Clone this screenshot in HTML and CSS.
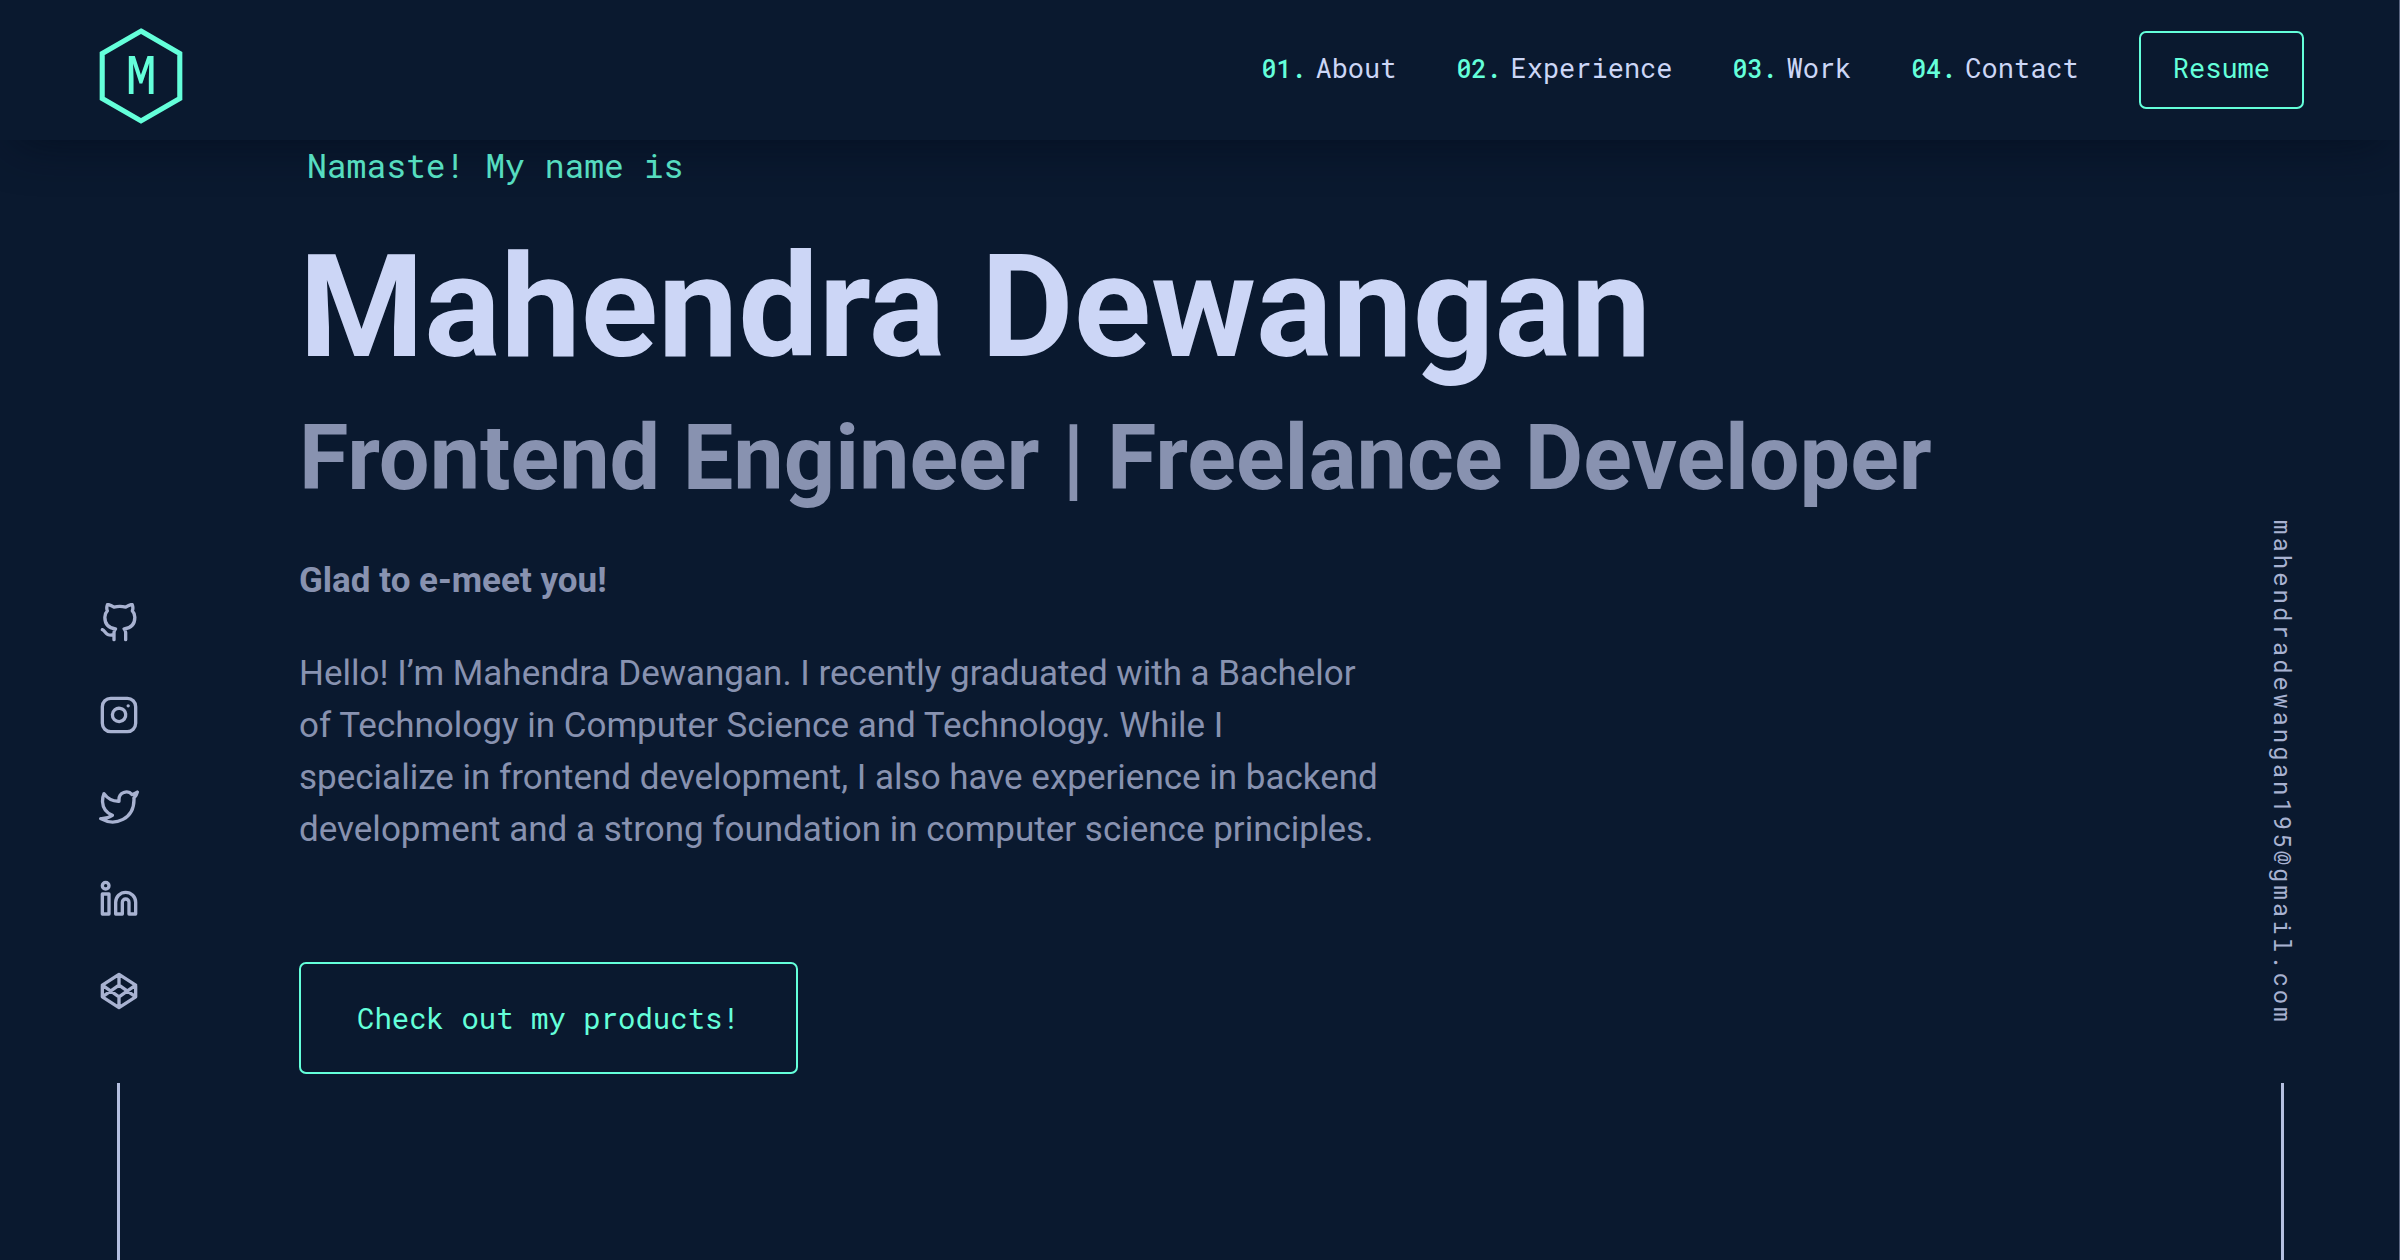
FILE: index.html
```html
<!DOCTYPE html>
<html lang="en">
<head>
<meta charset="utf-8">
<meta name="viewport" content="width=device-width, initial-scale=1">
<title>Mahendra Dewangan</title>
<link rel="stylesheet" href="styles.css">
</head>
<body>
<header class="header">
  <a class="logo" href="#top" aria-label="Home">
    <svg viewBox="0 0 84 96" fill="none" stroke="currentColor" aria-hidden="true">
      <path d="M42 4 80 26V70L42 92 4 70V26Z" stroke-width="5"/>
      <text x="42" y="66" text-anchor="middle" class="logo-letter">M</text>
    </svg>
  </a>
  <nav class="nav" aria-label="Main">
    <ol class="nav-list">
      <li><a href="#about"><span class="num">01.</span>About</a></li>
      <li><a href="#experience"><span class="num">02.</span>Experience</a></li>
      <li><a href="#work"><span class="num">03.</span>Work</a></li>
      <li><a href="#contact"><span class="num">04.</span>Contact</a></li>
    </ol>
    <a class="btn btn-small" href="#resume">Resume</a>
  </nav>
</header>
<div class="layout">
  <aside class="rail" aria-label="Social links">
    <ul class="social">
      <li><a href="#github" aria-label="GitHub"><svg class="icon" viewBox="0 0 24 24"><path d="M9 19c-5 1.500-5-2.500-7-3m14 6v-3.870a3.370 3.370 0 0 0-.94-2.610c3.140-.35 6.440-1.540 6.440-7A5.440 5.440 0 0 0 20 4.770 5.070 5.070 0 0 0 19.910 1S18.730.65 16 2.480a13.380 13.380 0 0 0-7 0C6.270.65 5.090 1 5.090 1A5.070 5.070 0 0 0 5 4.770a5.440 5.440 0 0 0-1.500 3.780c0 5.420 3.300 6.610 6.440 7A3.370 3.370 0 0 0 9 18.130V22"/></svg></a></li>
      <li><a href="#instagram" aria-label="Instagram"><svg class="icon" viewBox="0 0 24 24"><rect x="2" y="2" width="20" height="20" rx="5"/><path d="M16 11.370A4 4 0 1 1 12.630 8 4 4 0 0 1 16 11.370zM17.500 6.500h.01"/></svg></a></li>
      <li><a href="#twitter" aria-label="Twitter"><svg class="icon" viewBox="0 0 24 24"><path d="M23 3a10.900 10.900 0 0 1-3.140 1.530 4.480 4.480 0 0 0-7.860 3v1A10.660 10.660 0 0 1 3 4s-4 9 5 13a11.640 11.640 0 0 1-7 2c9 5 20 0 20-11.500a4.500 4.500 0 0 0-.08-.83A7.720 7.720 0 0 0 23 3z"/></svg></a></li>
      <li><a href="#linkedin" aria-label="LinkedIn"><svg class="icon" viewBox="0 0 24 24"><path d="M16 8a6 6 0 0 1 6 6v7h-4v-7a2 2 0 0 0-4 0v7h-4v-7a6 6 0 0 1 6-6z"/><rect x="2" y="9" width="4" height="12"/><circle cx="4" cy="4" r="2"/></svg></a></li>
      <li><a href="#codepen" aria-label="CodePen"><svg class="icon" viewBox="0 0 24 24"><path d="M12 2 22 8.500v7L12 22 2 15.500v-7zM12 22v-6.500M22 8.500l-10 7-10-7M2 15.500l10-7 10 7M12 2v6.500"/></svg></a></li>
    </ul>
    <span class="line"></span>
  </aside>
  <main class="hero" id="top">
    <p class="greeting">Namaste! My name is</p>
    <h1 class="name">Mahendra Dewangan</h1>
    <h2 class="role">Frontend Engineer | Freelance Developer</h2>
    <h3 class="meet">Glad to e-meet you!</h3>
    <p class="intro">Hello! I’m Mahendra Dewangan. I recently graduated with a Bachelor<br>of Technology in Computer Science and Technology. While I<br>specialize in frontend development, I also have experience in backend<br>development and a strong foundation in computer science principles.</p>
    <a class="btn btn-large" href="#products">Check out my products!</a>
  </main>
  <aside class="rail rail-email" aria-label="Email">
    <a class="email" href="mailto:mahendradewangan195@gmail.com">mahendradewangan195@gmail.com</a>
    <span class="line"></span>
  </aside>
</div>
</body>
</html>
```
FILE: styles.css
```css
:root {
  --navy: #0a192f;
  --green: #64ffda;
  --slate: #8892b0;
  --light-slate: #a8b2d1;
  --line: #b4bfe0;
  --lightest-slate: #ccd6f6;
  --sans: Roboto, "Liberation Sans", sans-serif;
  --mono: "Roboto Mono", "DejaVu Sans Mono", monospace;
}

* {
  box-sizing: border-box;
}

body {
  display: flex;
  flex-direction: column;
  min-height: 100vh;
  margin: 0;
  border-right: 1px solid #5a6580;
  background: var(--navy);
  color: var(--slate);
  font-family: var(--sans);
}

a {
  color: inherit;
  text-decoration: none;
}

h1, h2, h3, p, ol, ul {
  margin: 0;
  padding: 0;
  font-weight: 400;
}

ol, ul {
  list-style: none;
}

.header {
  display: flex;
  align-items: center;
  justify-content: space-between;
  height: 140px;
  padding: 0 95px 0 98px;
  box-shadow: 0 16px 48px -16px rgba(2, 12, 27, 0.7);
}

.logo {
  display: flex;
  padding-top: 12px;
  color: var(--green);
}

.logo svg {
  width: 86px;
  height: 98px;
}

.logo-letter {
  fill: currentColor;
  stroke: none;
  font: 400 52px var(--mono);
}

.nav, .nav-list {
  display: flex;
  align-items: center;
  gap: 60px;
  font: 400 27px/36px var(--mono);
  color: var(--lightest-slate);
}

.nav-list {
  padding-bottom: 4px;
}

.num {
  margin-right: 9px;
  color: var(--green);
  font-size: 25px;
  font-weight: 500;
}

.btn {
  border: 2px solid var(--green);
  border-radius: 7px;
  color: var(--green);
  font-family: var(--mono);
}

.btn-small {
  padding: 17px 32px 21px;
}

.btn-large {
  margin-top: 106px;
  padding: 36px 56px;
  font-size: 29px;
  line-height: 36px;
}

.layout {
  display: flex;
  flex: 1;
}

.rail {
  display: flex;
  flex-direction: column;
  align-items: center;
  justify-content: flex-end;
  width: 237px;
  color: var(--light-slate);
}

.social {
  display: grid;
  gap: 52px;
}

.social a {
  display: block;
}

.icon {
  display: block;
  width: 40px;
  height: 40px;
  fill: none;
  stroke: currentColor;
  stroke-width: 2;
  stroke-linecap: round;
  stroke-linejoin: round;
}

.line {
  width: 3px;
  height: 177px;
  margin-top: 72px;
  background: var(--line);
}

.rail-email .line {
  margin-top: 58px;
}

.rail-email {
  width: 233px;
}

.email {
  writing-mode: vertical-rl;
  font: 24px var(--mono);
  letter-spacing: 3px;
}

.hero {
  display: flex;
  flex: 1;
  flex-direction: column;
  align-items: flex-start;
  padding-left: 62px;
}

.greeting {
  padding: 7px 8px;
  color: var(--green);
  font: 33px/36px var(--mono);
  opacity: 0.85;
}

.name {
  margin-top: 42px;
  color: var(--lightest-slate);
  font-size: 143px;
  font-weight: 700;
  line-height: 150px;
}

.role {
  margin-top: 22px;
  font-size: 90px;
  font-weight: 700;
  line-height: 110px;
}

.meet {
  margin-top: 41px;
  font-size: 35px;
  font-weight: 700;
  line-height: 52px;
}

.intro {
  margin-top: 41px;
  font-size: 35px;
  line-height: 52px;
}
```
